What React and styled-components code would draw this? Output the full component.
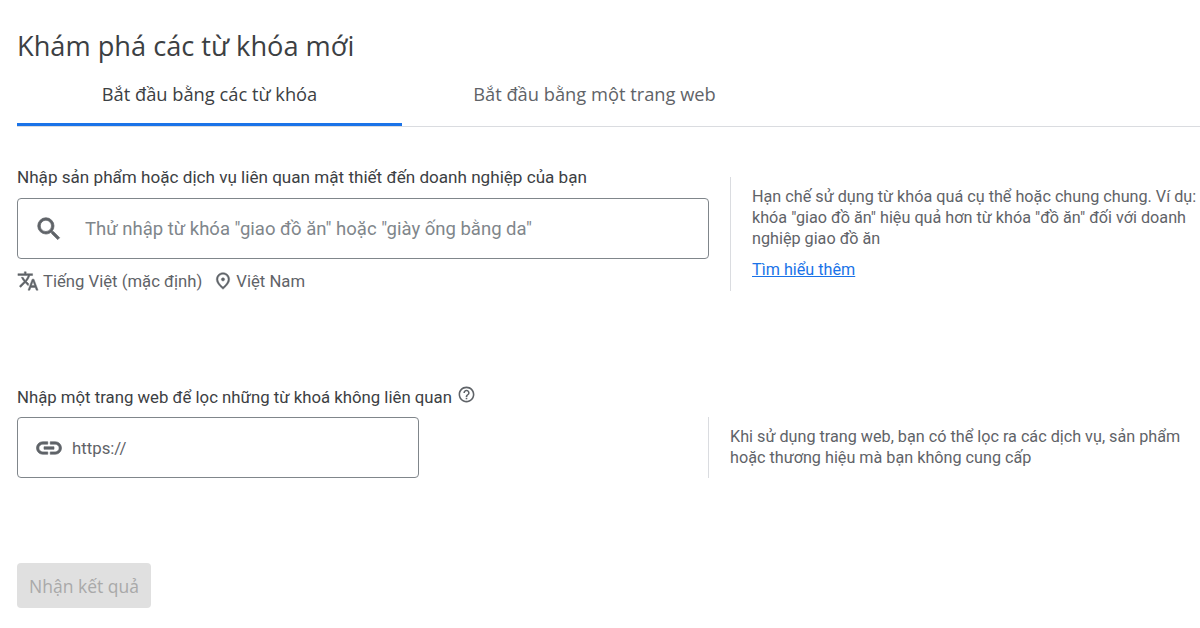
import React from "react";
import styled, { createGlobalStyle } from "styled-components";
import { MdSearch, MdTranslate, MdOutlinePlace, MdLink, MdHelpOutline } from "react-icons/md";

const Global = createGlobalStyle`
  html, body {
    margin: 0;
    padding: 0;
    background: #fff;
    overflow: hidden;
  }
  body {
    font-family: "Roboto", "Liberation Sans", sans-serif;
    color: #3c4043;
  }
`;

const Page = styled.div`
  width: 1200px;
  height: 628px;
  overflow: hidden;
  display: flex;
  flex-direction: column;
`;

const Title = styled.h1`
  margin: 0;
  padding: 28px 0 0 17px;
  font-family: "Open Sans", "Liberation Sans", sans-serif;
  font-size: 27.2px;
  line-height: 35px;
  font-weight: 400;
  color: #3c4043;
`;

const Tabs = styled.div`
  display: flex;
  margin-left: 17px;
  height: 63px;
  border-bottom: 1px solid #dadce0;
`;

const Tab = styled.div`
  width: 385px;
  height: ${(p) => (p.$active ? "63px" : "62px")};
  padding-top: 19px;
  box-sizing: border-box;
  text-align: center;
  font-family: "Open Sans", "Liberation Sans", sans-serif;
  font-size: 18.3px;
  line-height: 24px;
  font-weight: 500;
  color: ${(p) => (p.$active ? "#3c4043" : "#5f6368")};
  border-bottom: ${(p) => (p.$active ? "3px solid #1a73e8" : "none")};
`;

const Section = styled.section`
  display: flex;
  padding-left: 17px;
  margin-top: ${(p) => p.$top}px;
`;

const Main = styled.div`
  width: ${(p) => p.$width}px;
  flex-shrink: 0;
`;

const Label = styled.div`
  display: flex;
  align-items: flex-start;
  gap: 5px;
  height: ${(p) => p.$height}px;
  font-size: ${(p) => p.$size}px;
  line-height: 20px;
  color: #3c4043;
  white-space: nowrap;

  svg {
    font-size: 19px;
    color: #5f6368;
    margin-top: -2px;
  }
`;

const InputBox = styled.div`
  display: flex;
  align-items: center;
  box-sizing: border-box;
  width: ${(p) => p.$width}px;
  height: 61px;
  border: 1px solid #80868b;
  border-radius: 4px;
  background: #fff;
`;

const SearchIcon = styled(MdSearch)`
  font-size: 30px;
  color: #5f6368;
  margin-left: 16px;
  margin-right: 21px;

  path:not([fill="none"]) {
    stroke: currentColor;
    stroke-width: 0.6;
  }
`;

const Placeholder = styled.span`
  font-size: 18.5px;
  color: #80868b;
  white-space: nowrap;
`;

const LinkIcon = styled(MdLink)`
  font-size: 30px;
  color: #5f6368;
  margin-left: 16px;
  margin-right: 8px;

  path:not([fill="none"]) {
    stroke: currentColor;
    stroke-width: 0.5;
  }
`;

const UrlHint = styled.span`
  font-size: 16.8px;
  color: #5f6368;
`;

const Meta = styled.div`
  display: flex;
  align-items: center;
  height: 20px;
  margin-top: 12px;
  font-size: 16.7px;
  color: #5f6368;
  white-space: nowrap;
`;

const MetaItem = styled.span`
  display: flex;
  align-items: center;
  gap: ${(p) => p.$gap}px;
  margin-right: 11px;

  svg {
    font-size: ${(p) => p.$icon}px;
  }

  path:not([fill="none"]) {
    stroke: currentColor;
    stroke-width: 0.5;
  }
`;

const Note = styled.aside`
  box-sizing: border-box;
  width: ${(p) => p.$width}px;
  height: ${(p) => p.$height}px;
  margin-top: ${(p) => p.$top}px;
  margin-left: ${(p) => p.$left}px;
  padding-left: 21px;
  padding-top: ${(p) => p.$pad}px;
  border-left: 1px solid #dadce0;
  font-size: 16.2px;
  line-height: 21px;
  color: #5f6368;
`;

const NoteLink = styled.a`
  display: block;
  margin-top: 10px;
  color: #1a73e8;
  text-decoration: underline;
`;

const SubmitButton = styled.button`
  display: block;
  width: 134px;
  height: 45px;
  margin: 85px 0 0 17px;
  padding: 0;
  border: none;
  border-radius: 4px;
  background: #e0e0e0;
  color: #a9a9a9;
  font-family: "Open Sans", "Liberation Sans", sans-serif;
  font-size: 17.5px;
  font-weight: 500;
`;

export default function App() {
  return (
    <Page>
      <Global />
      <Title>Khám phá các từ khóa mới</Title>
      <Tabs>
        <Tab $active>Bắt đầu bằng các từ khóa</Tab>
        <Tab>Bắt đầu bằng một trang web</Tab>
      </Tabs>

      <Section $top={40}>
        <Main $width={692}>
          <Label $size={17.1} $height={31}>Nhập sản phẩm hoặc dịch vụ liên quan mật thiết đến doanh nghiệp của bạn</Label>
          <InputBox $width={692}>
            <SearchIcon />
            <Placeholder>Thử nhập từ khóa "giao đồ ăn" hoặc "giày ống bằng da"</Placeholder>
          </InputBox>
          <Meta>
            <MetaItem $gap={4} $icon={22}>
              <MdTranslate />
              Tiếng Việt (mặc định)
            </MetaItem>
            <MetaItem $gap={3} $icon={20}>
              <MdOutlinePlace />
              Việt Nam
            </MetaItem>
          </Meta>
        </Main>
        <Note $width={470} $height={114} $top={10} $left={21} $pad={9}>
          Hạn chế sử dụng từ khóa quá cụ thể hoặc chung chung. Ví dụ: khóa "giao đồ ăn" hiệu quả hơn từ khóa "đồ ăn" đối với doanh nghiệp giao đồ ăn
          <NoteLink>Tìm hiểu thêm</NoteLink>
        </Note>
      </Section>

      <Section $top={96}>
        <Main $width={691}>
          <Label $size={16.75} $height={30}>
            Nhập một trang web để lọc những từ khoá không liên quan
            <MdHelpOutline />
          </Label>
          <InputBox $width={402}>
            <LinkIcon />
            <UrlHint>https://</UrlHint>
          </InputBox>
        </Main>
        <Note $width={482} $height={61} $top={30} $left={0} $pad={9}>
          Khi sử dụng trang web, bạn có thể lọc ra các dịch vụ, sản phẩm hoặc thương hiệu mà bạn không cung cấp
        </Note>
      </Section>

      <SubmitButton disabled>Nhận kết quả</SubmitButton>
    </Page>
  );
}
